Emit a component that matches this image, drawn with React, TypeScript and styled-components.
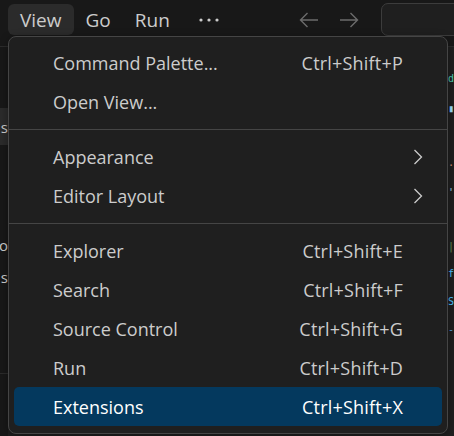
import React from "react";
import styled, { createGlobalStyle } from "styled-components";

const Global = createGlobalStyle`
  html, body { margin: 0; padding: 0; background: #181818; overflow: hidden; }
  body { font-family: "Open Sans", "Noto Sans", sans-serif; }
`;

const Window = styled.div`
  position: relative;
  width: 454px;
  height: 436px;
  overflow: hidden;
  display: flex;
  flex-direction: column;
  background: #181818;
`;

const TitleBar = styled.div`
  height: 47px;
  flex: none;
  box-sizing: border-box;
  border-bottom: 1px solid #2b2b2b;
  display: flex;
  align-items: flex-start;
  padding: 4px 0 0 8px;
`;

const MenuBarItem = styled.div<{ $active?: boolean }>`
  height: 31px;
  display: flex;
  align-items: center;
  padding: 0 12px;
  border-radius: 6px;
  font-size: 19px;
  color: #cccccc;
  background: ${(p) => (p.$active ? "#2b2b2b" : "transparent")};
`;

const MoreItem = styled(MenuBarItem)`
  padding: 0 14px 0 17px;
`;

const NavGroup = styled.div`
  display: flex;
  align-items: center;
  gap: 20px;
  height: 31px;
  margin-left: 66px;
`;

const CommandCenter = styled.div`
  margin-left: 22px;
  margin-top: -1px;
  width: 120px;
  height: 33px;
  flex: none;
  box-sizing: border-box;
  border: 1px solid #3c3c3c;
  border-radius: 7px;
  background: #1f1f1f;
`;

const Workbench = styled.div`
  flex: 1;
  display: flex;
  min-height: 0;
`;

const SidePanel = styled.div`
  width: 8px;
  flex: none;
  overflow: hidden;
  display: flex;
  flex-direction: column;
  background: #181818;
`;

const SideRow = styled.div<{ $h: number; $sel?: boolean; $line?: boolean }>`
  height: ${(p) => p.$h}px;
  flex: none;
  display: flex;
  justify-content: flex-end;
  align-items: center;
  white-space: nowrap;
  font-size: 15px;
  color: #cccccc;
  background: ${(p) => (p.$sel ? "#2b2b2b" : "transparent")};
  border-bottom: ${(p) => (p.$line ? "1px solid #2b2b2b" : "none")};
`;

const Editor = styled.div`
  flex: 1;
  background: #1f1f1f;
  display: flex;
  flex-direction: column;
  padding-left: 440px;
  overflow: hidden;
`;

const CodeLine = styled.div<{ $color: string; $h?: number }>`
  height: ${(p) => p.$h ?? 27}px;
  flex: none;
  display: flex;
  align-items: center;
  font-family: "DejaVu Sans Mono", monospace;
  font-size: 10px;
  white-space: nowrap;
  color: ${(p) => p.$color};
`;

const Menu = styled.div`
  position: absolute;
  left: 8px;
  top: 36px;
  width: 440px;
  box-sizing: border-box;
  background: #1f1f1f;
  border: 1px solid #454545;
  border-radius: 8px;
  padding: 6px 5px 7px;
  box-shadow: 0 2px 8px rgba(0, 0, 0, 0.36);
`;

const Row = styled.div<{ $selected?: boolean }>`
  height: 39px;
  display: grid;
  grid-template-columns: 1fr auto 20px;
  align-items: center;
  padding: 0 19px 0 39px;
  border-radius: 5px;
  font-size: 18px;
  color: ${(p) => (p.$selected ? "#ffffff" : "#cccccc")};
  background: ${(p) => (p.$selected ? "#04395e" : "transparent")};
`;

const Shortcut = styled.span`
  text-align: right;
  letter-spacing: 0.2px;
`;

const Indicator = styled.span`
  display: flex;
  justify-content: flex-end;
  align-items: center;
`;

const Separator = styled.div`
  height: 16px;
  margin: 0 -5px;
  display: flex;
  align-items: center;
  &::after {
    content: "";
    display: block;
    width: 100%;
    height: 1px;
    background: #454545;
  }
`;

const Chevron = () => (
  <svg width="10" height="16" viewBox="0 0 10 16" fill="none">
    <path d="M1.5 1 L8.5 8 L1.5 15" stroke="#cccccc" strokeWidth="1.3" />
  </svg>
);

const Arrow = ({ dir }: { dir: "left" | "right" }) => (
  <svg width="20" height="16" viewBox="0 0 20 16" fill="none">
    {dir === "left" ? (
      <path d="M19 8 H1.5 M8.5 1 L1.5 8 L8.5 15" stroke="#6b6b6b" strokeWidth="1.4" />
    ) : (
      <path d="M1 8 H18.5 M11.5 1 L18.5 8 L11.5 15" stroke="#6b6b6b" strokeWidth="1.4" />
    )}
  </svg>
);

const Dots = () => (
  <svg width="20" height="4" viewBox="0 0 20 4">
    <circle cx="2" cy="2" r="1.6" fill="#cccccc" />
    <circle cx="10" cy="2" r="1.6" fill="#cccccc" />
    <circle cx="18" cy="2" r="1.6" fill="#cccccc" />
  </svg>
);

type Item =
  | { kind: "item"; label: string; shortcut?: string; submenu?: boolean; selected?: boolean }
  | { kind: "sep" };

const items: Item[] = [
  { kind: "item", label: "Command Palette...", shortcut: "Ctrl+Shift+P" },
  { kind: "item", label: "Open View..." },
  { kind: "sep" },
  { kind: "item", label: "Appearance", submenu: true },
  { kind: "item", label: "Editor Layout", submenu: true },
  { kind: "sep" },
  { kind: "item", label: "Explorer", shortcut: "Ctrl+Shift+E" },
  { kind: "item", label: "Search", shortcut: "Ctrl+Shift+F" },
  { kind: "item", label: "Source Control", shortcut: "Ctrl+Shift+G" },
  { kind: "item", label: "Run", shortcut: "Ctrl+Shift+D" },
  { kind: "item", label: "Extensions", shortcut: "Ctrl+Shift+X", selected: true },
];

const code: { text: string; color: string; h?: number }[] = [
  { text: "", color: "#cccccc", h: 16 },
  { text: "d", color: "#4ec9b0", h: 30 },
  { text: "▮", color: "#9cdcfe", h: 30 },
  { text: "", color: "#cccccc", h: 28 },
  { text: "·", color: "#ce9178", h: 28 },
  { text: "'", color: "#9cdcfe", h: 26 },
  { text: "", color: "#cccccc", h: 28 },
  { text: "|", color: "#6a9955", h: 26 },
  { text: "f", color: "#4fc1ff", h: 28 },
  { text: "S", color: "#4fc1ff", h: 28 },
  { text: "-", color: "#569cd6", h: 28 },
];

export default function App() {
  return (
    <>
      <Global />
      <Window>
        <TitleBar>
          <MenuBarItem $active>View</MenuBarItem>
          <MenuBarItem>Go</MenuBarItem>
          <MenuBarItem>Run</MenuBarItem>
          <MoreItem>
            <Dots />
          </MoreItem>
          <NavGroup>
            <Arrow dir="left" />
            <Arrow dir="right" />
          </NavGroup>
          <CommandCenter />
        </TitleBar>
        <Workbench>
          <SidePanel>
            <SideRow $h={61} />
            <SideRow $h={37} $sel>
              s
            </SideRow>
            <SideRow $h={84} />
            <SideRow $h={32}>o</SideRow>
            <SideRow $h={32}>s</SideRow>
            <SideRow $h={80} $line />
          </SidePanel>
          <Editor>
            {code.map((c, i) => (
              <CodeLine key={i} $color={c.color} $h={c.h}>
                {c.text}
              </CodeLine>
            ))}
          </Editor>
        </Workbench>
        <Menu>
          {items.map((it, i) =>
            it.kind === "sep" ? (
              <Separator key={i} />
            ) : (
              <Row key={i} $selected={it.selected}>
                <span>{it.label}</span>
                <Shortcut>{it.shortcut ?? ""}</Shortcut>
                <Indicator>{it.submenu ? <Chevron /> : null}</Indicator>
              </Row>
            )
          )}
        </Menu>
      </Window>
    </>
  );
}
